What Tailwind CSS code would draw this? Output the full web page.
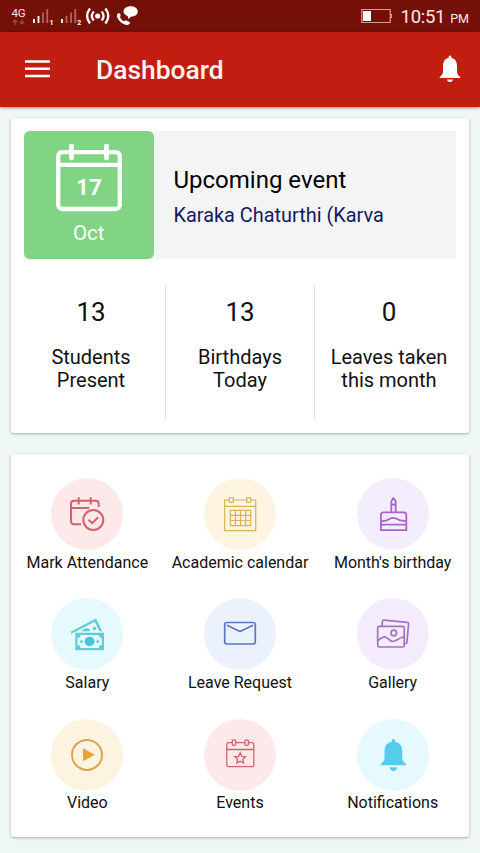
<!DOCTYPE html>
<html lang="en">
<head>
<meta charset="utf-8">
<title>Dashboard</title>
<script src="https://cdn.jsdelivr.net/npm/@tailwindcss/browser@4"></script>
</head>
<body class="w-[480px] h-[853px] overflow-hidden bg-[#eff6f6] font-[Roboto,sans-serif] text-[#111]">
<div class="flex h-full flex-col">
  <!-- Status bar -->
  <div class="flex h-8 shrink-0 items-center justify-between bg-[#741008] pr-[11px] text-[#fde8e4]">
    <svg class="h-8 w-[145px]" viewBox="0 0 145 32" fill="none">
      <text x="11.5" y="17" font-size="11.500" textLength="14" fill="#fbe6e2">4G</text>
      <path d="M15 25v-4.500M13 22l2-2 2 2M22 19.500v4.500M20 22l2 2 2-2" stroke="#a05048" stroke-width="1.200"/>
      <path d="M34 19v4M38.500 16v7" stroke="#fff" stroke-width="1.800"/>
      <path d="M43 12.500V23M47.300 9v14" stroke="#b0655d" stroke-width="1.800"/>
      <text x="49.500" y="25" font-size="7" font-weight="700" fill="#fff">1</text>
      <path d="M62 19v4" stroke="#fff" stroke-width="1.800"/>
      <path d="M66.500 16v7M71 12.500V23M75.300 9v14" stroke="#b0655d" stroke-width="1.800"/>
      <text x="77.300" y="25" font-size="7" font-weight="700" fill="#fff">2</text>
      <circle cx="97.700" cy="16" r="2.600" fill="#fff"/>
      <path d="M93.800 11.500q-4 4.500 0 9M101.600 11.500q4 4.500 0 9M90 8.500q-5.800 7.500 0 15M105.400 8.500q5.800 7.500 0 15" stroke="#fff" stroke-width="2.300"/>
      <path d="M117 14.500c1.500-2 3.300-1.300 3.600.300.200 1.500-.800 1.700-.400 2.700.8 1.800 1.800 2.900 3.500 3.600 1 .4 1.500-.900 3.200-.4l2.600 1.200c.8.600.4 1.500-.2 2.200-1.500 1.500-4.500 1-7-.800-3-2.100-6-5.500-5.300-8.800Z" fill="#fff"/>
      <path d="M130.700 6.300c4 0 7.100 2.200 7.100 5.300 0 2.900-2.800 5.100-6.800 5.200l-2.700 2.300-.5-2.900c-2.500-.8-4.300-2.400-4.300-4.600 0-3.100 3.200-5.300 7.200-5.300Z" fill="#fff"/>
    </svg>
    <div class="flex items-center">
      <svg class="h-8 w-[32px]" viewBox="0 0 32 32" fill="none"><path d="M.8 9.500h28.400v13H.8Z" stroke="#dc9b92" stroke-width="1.200"/><path d="M30.500 14v4" stroke="#dc9b92"/><path d="M2 11h8v10H2Z" fill="#fff"/></svg>
      <div class="ml-[8px] flex items-baseline gap-[5px]"><span class="pt-px text-[18.500px] leading-8 tracking-[-0.3px]">10:51</span><span class="text-[12.500px]">PM</span></div>
    </div>
  </div>
  <!-- App bar -->
  <header class="flex h-[74.500px] shrink-0 items-center bg-[#c11e11] pl-[25px] pr-[19px] text-[#fff1ee] shadow-[0_1px_3px_rgba(0,0,0,0.4)]">
    <svg class="h-6 w-[25px]" viewBox="0 0 25 24"><path d="M0 4.500h25M0 11.800h25M0 19h25" stroke="#fff" stroke-width="2.600"/></svg>
    <h1 class="ml-[46px] flex-1 pt-[3px] text-[26.400px] font-medium">Dashboard</h1>
    <svg class="h-[28px] w-[22px]" viewBox="0 0 22 28" fill="#fff"><path d="M11 .5c1 0 1.400.8 1.400 2.400C16.500 3.500 18 7 18 11v5.500c0 2.500 1 3.500 3.300 5.500v1H.7v-1C3 20 4 19 4 16.500V11c0-4 1.500-7.500 5.600-8.100C9.600 1.300 10 .5 11 .5ZM8 24.500h6c-.4 1.700-1.400 2.500-3 2.500s-2.600-.8-3-2.500Z"/></svg>
  </header>
  <main class="flex flex-col px-[11px] pt-[11px]">
    <!-- Summary -->
    <section class="h-[315.500px] rounded-[3px] bg-white px-[13px] pt-[13px] shadow-[0_1px_3px_rgba(0,0,0,0.3)]">
      <div class="flex h-[128px] w-[432px] bg-[#f4f4f4]">
        <div class="flex h-[128.500px] w-[129.500px] flex-col items-center rounded-[6px] bg-[#81d483] pt-[13px] text-white">
          <svg class="h-[68px] w-[66px]" viewBox="0 0 66 68" fill="none" stroke="#fff" stroke-width="4.300">
            <rect x="2.200" y="8.200" width="61.600" height="56.800" rx="4"/>
            <path d="M2 20.800h62"/><path d="M15.500 2v12M50.500 2v12" stroke-width="4.800" stroke-linecap="round"/>
            <text x="33" y="51" font-size="22.500" font-weight="700" text-anchor="middle" fill="#fff" stroke="none">17</text>
          </svg>
          <span class="mt-[8px] text-[20.500px] leading-[26px]">Oct</span>
        </div>
        <div class="pl-[20px] pt-[33px]">
          <div class="text-[24px] leading-[32px] text-black">Upcoming event</div>
          <div class="mt-[8.500px] text-[19.900px] leading-6 text-[#131a64]">Karaka Chaturthi (Karva</div>
        </div>
      </div>
      <div class="-mx-[5px] mt-[27px] grid h-[133px] grid-cols-[147px_149px_149px] divide-x divide-[#dedede] text-center">
        <div class="pr-[2px] pt-[10px]"><div class="text-[26px] leading-8">13</div><div class="mt-[18px] text-[20px] leading-[23.500px]">Students<br>Present</div></div>
        <div class="pt-[10px]"><div class="text-[26px] leading-8">13</div><div class="mt-[18px] text-[20px] leading-[23.500px]">Birthdays<br>Today</div></div>
        <div class="pr-px pt-[10px]"><div class="text-[26px] leading-8">0</div><div class="mt-[18px] text-[20px] leading-[23.500px]">Leaves taken<br>this month</div></div>
      </div>
    </section>
    <!-- Shortcuts -->
    <section class="mt-[21px] grid h-[382.500px] grid-cols-3 auto-rows-[120.400px] rounded-[3px] bg-white pt-[24px] text-center text-[16px] leading-5 shadow-[0_1px_3px_rgba(0,0,0,0.3)]">
      <div class="flex flex-col items-center gap-[2.500px]">
        <svg class="size-[72px] rounded-full bg-[#fde9ea]" viewBox="0 0 72 72" fill="none" stroke="#d4606a" stroke-width="2">
          <path d="M30 46.300h-7a3 3 0 0 1-3-3V25.700a3 3 0 0 1 3-3h21.700a3 3 0 0 1 3 3V29M20 30h18M27.700 19.300v7.200M39.700 19.300v7.200"/>
          <circle cx="42.300" cy="42" r="10"/><path d="m37.500 41.800 3.700 3.400 6-6"/>
        </svg><span>Mark Attendance</span>
      </div>
      <div class="flex flex-col items-center gap-[2.500px]">
        <svg class="size-[72px] rounded-full bg-[#fdf4e1]" viewBox="0 0 72 72" fill="none" stroke="#d6b45a" stroke-width="1.200">
          <path d="M25.300 22h-4.600v30.700h31V22h-5M29.300 22h13.400M20.700 28.300h31M26.300 32.300h20.400v15.400H26.300ZM31.400 32.300v15.400M36.500 32.300v15.400M41.600 32.300v15.400M26.300 37.400h20.400M26.300 42.500h20.400"/>
          <rect x="25.300" y="19.700" width="4" height="4.600"/><rect x="42.700" y="19.700" width="4" height="4.600"/>
        </svg><span>Academic calendar</span>
      </div>
      <div class="flex flex-col items-center gap-[2.500px]">
        <svg class="size-[72px] rounded-full bg-[#f3edfd]" viewBox="0 0 72 72" fill="none" stroke="#a866cc" stroke-width="1.800">
          <path d="M23.900 52.100V37a2.700 2.700 0 0 1 2.700-2.700h20a2.700 2.700 0 0 1 2.700 2.700v15.100ZM23.900 46.700h25.400M23.900 42.800c4 1.200 6-.3 8.500-1.800s4.500-1.700 7-.3c3.500 2.100 6 2.500 9.900 2.100M34.300 34.300v-7.600h4.400v7.600M36.500 20.200c-1.800 2-2.300 3-2.300 4.200 0 1.400 1 2.300 2.300 2.300s2.300-.9 2.300-2.300c0-1.200-.5-2.200-2.300-4.200Z"/>
        </svg><span>Month's birthday</span>
      </div>
      <div class="flex flex-col items-center gap-[2.500px]">
        <svg class="size-[72px] rounded-full bg-[#e6f9fd]" viewBox="0 0 72 72" fill="none">
          <path d="m20 33.500 25-13 6.200 12.700h-2.600l-4.900-9.400L21 35.500v2Z" fill="#62cbd9"/>
          <path d="M30.500 33.200c2.500-3 5.500-4 8.500-1.500l-.5 1.500Z" fill="#62cbd9"/><circle cx="43.500" cy="30.500" r="1.700" fill="#62cbd9"/>
          <path d="M24.300 34.700H53v17.600H24.300Z" fill="#62cbd9"/>
          <path d="M29.500 37h18.300c0 1.800 1.200 3 3 3v7c-1.800 0-3 1.200-3 3H29.500c0-1.800-1.200-3-3-3v-7c1.800 0 3-1.200 3-3Z" fill="#e6f9fd"/>
          <ellipse cx="38.600" cy="43.500" rx="5" ry="4.700" fill="#48c4d8"/><circle cx="30.500" cy="43.500" r="1.500" fill="#62cbd9"/><circle cx="46.800" cy="43.500" r="1.500" fill="#62cbd9"/>
        </svg><span>Salary</span>
      </div>
      <div class="flex flex-col items-center gap-[2.500px]">
        <svg class="size-[72px] rounded-full bg-[#ecf1fe]" viewBox="0 0 72 72" fill="none" stroke="#5876c8" stroke-width="1.700">
          <rect x="20.700" y="24.500" width="30.600" height="21.500" rx="2.200"/><path d="m23.500 27.500 12.500 6 12.500-6" stroke-linecap="round" stroke-linejoin="round"/>
        </svg><span>Leave Request</span>
      </div>
      <div class="flex flex-col items-center gap-[2.500px]">
        <svg class="size-[72px] rounded-full bg-[#f4ecfd]" viewBox="0 0 72 72" fill="none" stroke="#a86fc4" stroke-width="1.700">
          <rect x="20.700" y="28.300" width="26.500" height="20.700" rx="1.500"/>
          <path d="M25 28.300l.4-4.800a1.500 1.500 0 0 1 1.600-1.300l23.200 2.100a1.500 1.500 0 0 1 1.400 1.600l-1.700 18.300a1.500 1.500 0 0 1-1.500 1.400l-1.200-.1M20.700 42.500c3-1.500 4.300-3.700 6.800-3.700 3.300 0 4.800 4.700 8.200 4.700 3 0 5.500-3.200 11.500-4.700"/>
          <circle cx="36.800" cy="35" r="2.800"/>
        </svg><span>Gallery</span>
      </div>
      <div class="flex flex-col items-center gap-[2.500px]">
        <svg class="size-[72px] rounded-full bg-[#fdf3e1]" viewBox="0 0 72 72" fill="none">
          <circle cx="36" cy="35.900" r="15" stroke="#daa548" stroke-width="2"/><path d="m32 29.300 11.700 6.500L32 42.300Z" fill="#eda12f"/>
        </svg><span>Video</span>
      </div>
      <div class="flex flex-col items-center gap-[2.500px]">
        <svg class="size-[72px] rounded-full bg-[#fde9ea]" viewBox="0 0 72 72" fill="none" stroke="#d0646c" stroke-width="1.300">
          <path d="M28.300 23.700h-4a1.500 1.500 0 0 0-1.500 1.500v21a1.500 1.500 0 0 0 1.500 1.500h24a1.500 1.500 0 0 0 1.500-1.500v-21a1.500 1.500 0 0 0-1.500-1.500h-3.800M31.700 23.700h9M22.800 30.500h27"/>
          <rect x="28.300" y="20.900" width="3.400" height="5.400" rx="1"/><rect x="41" y="20.900" width="3.400" height="5.400" rx="1"/>
          <path d="m36.200 33.800 1.600 3.500 3.800.4-2.800 2.600.8 3.800-3.400-1.900-3.400 1.900.8-3.800-2.800-2.600 3.800-.4Z"/>
        </svg><span>Events</span>
      </div>
      <div class="flex flex-col items-center gap-[2.500px]">
        <svg class="size-[72px] rounded-full bg-[#e5f9fe]" viewBox="0 0 72 72" fill="#54cdea"><path d="M36.400 20c1.200 0 1.700.9 1.700 2.700 5 1 7.100 4.500 7.100 9v6.500c0 3.200 1 4.600 3.900 6.800v1.300H23.700V45c2.900-2.200 3.900-3.600 3.900-6.800v-6.500c0-4.500 2.100-8 7.100-9 0-1.800.5-2.700 1.700-2.700ZM32.600 48.300h7.600c-.6 2.400-1.800 3.700-3.800 3.700s-3.200-1.300-3.800-3.700Z"/></svg><span>Notifications</span>
      </div>
    </section>
  </main>
</div>
</body>
</html>
